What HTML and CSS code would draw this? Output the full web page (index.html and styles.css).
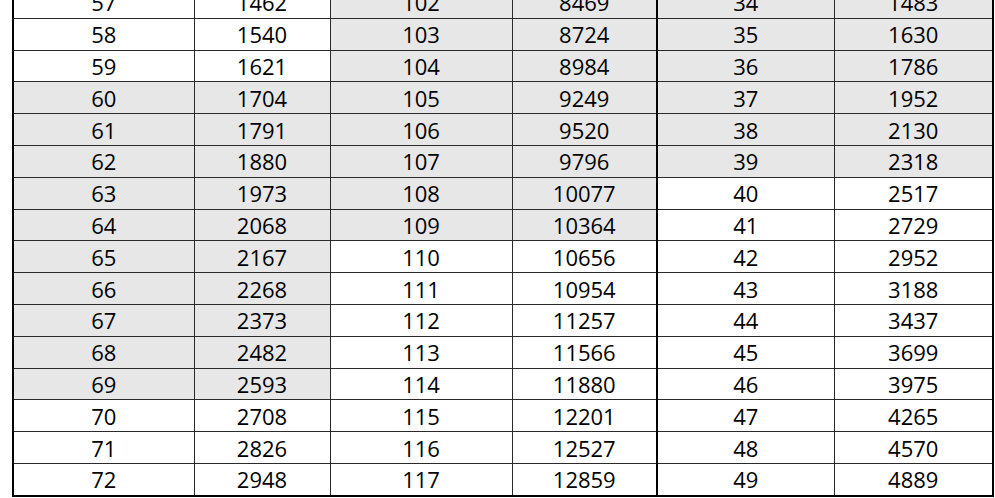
FILE: index.html
```html
<!DOCTYPE html>
<html>
<head>
<meta charset="utf-8">
<link rel="stylesheet" href="styles.css">
</head>
<body>
<table class="grid">
<colgroup>
<col class="c1"><col class="c2"><col class="c3"><col class="c4"><col class="c5"><col class="c6">
</colgroup>
<tbody>
<tr><td>57</td><td>1462</td><td class="g">102</td><td class="g">8469</td><td class="g sep">34</td><td class="g">1483</td></tr>
<tr><td>58</td><td>1540</td><td class="g">103</td><td class="g">8724</td><td class="g sep">35</td><td class="g">1630</td></tr>
<tr><td>59</td><td>1621</td><td class="g">104</td><td class="g">8984</td><td class="g sep">36</td><td class="g">1786</td></tr>
<tr><td class="g">60</td><td class="g">1704</td><td class="g">105</td><td class="g">9249</td><td class="g sep">37</td><td class="g">1952</td></tr>
<tr><td class="g">61</td><td class="g">1791</td><td class="g">106</td><td class="g">9520</td><td class="g sep">38</td><td class="g">2130</td></tr>
<tr><td class="g">62</td><td class="g">1880</td><td class="g">107</td><td class="g">9796</td><td class="g sep">39</td><td class="g">2318</td></tr>
<tr><td class="g">63</td><td class="g">1973</td><td class="g">108</td><td class="g">10077</td><td class="sep">40</td><td>2517</td></tr>
<tr><td class="g">64</td><td class="g">2068</td><td class="g">109</td><td class="g">10364</td><td class="sep">41</td><td>2729</td></tr>
<tr><td class="g">65</td><td class="g">2167</td><td>110</td><td>10656</td><td class="sep">42</td><td>2952</td></tr>
<tr><td class="g">66</td><td class="g">2268</td><td>111</td><td>10954</td><td class="sep">43</td><td>3188</td></tr>
<tr><td class="g">67</td><td class="g">2373</td><td>112</td><td>11257</td><td class="sep">44</td><td>3437</td></tr>
<tr><td class="g">68</td><td class="g">2482</td><td>113</td><td>11566</td><td class="sep">45</td><td>3699</td></tr>
<tr><td class="g">69</td><td class="g">2593</td><td>114</td><td>11880</td><td class="sep">46</td><td>3975</td></tr>
<tr><td>70</td><td>2708</td><td>115</td><td>12201</td><td class="sep">47</td><td>4265</td></tr>
<tr><td>71</td><td>2826</td><td>116</td><td>12527</td><td class="sep">48</td><td>4570</td></tr>
<tr><td>72</td><td>2948</td><td>117</td><td>12859</td><td class="sep">49</td><td>4889</td></tr>
</tbody>
</table>
</body>
</html>
```

FILE: styles.css
```css
html, body {
  margin: 0;
  padding: 0;
  background: #ffffff;
  overflow: hidden;
}

.grid {
  border-collapse: collapse;
  table-layout: fixed;
  width: 980px;
  margin-left: 12px;
  margin-top: -15px;
  border: 2px solid #000000;
  font-family: "Open Sans", "Liberation Sans", sans-serif;
  font-size: 22px;
  font-weight: 500;
  color: #000000;
}

.c1 { width: 181px; }
.c2 { width: 136px; }
.c3 { width: 182px; }
.c4 { width: 145px; }
.c5 { width: 177px; }
.c6 { width: 159px; }

.grid td {
  height: 30.8px;
  padding: 0;
  text-align: center;
  vertical-align: middle;
  line-height: 1;
  border: 1px solid #2a2a2a;
  background: #ffffff;
}

.grid td.g {
  background: #e7e7e7;
}

.grid td.sep {
  border-left: 2px solid #000000;
}

.grid tr:last-child td {
  border-bottom: 2px solid #000000;
}

.grid td:first-child {
  border-left: 2px solid #000000;
}

.grid td:last-child {
  border-right: 2px solid #000000;
}
```
